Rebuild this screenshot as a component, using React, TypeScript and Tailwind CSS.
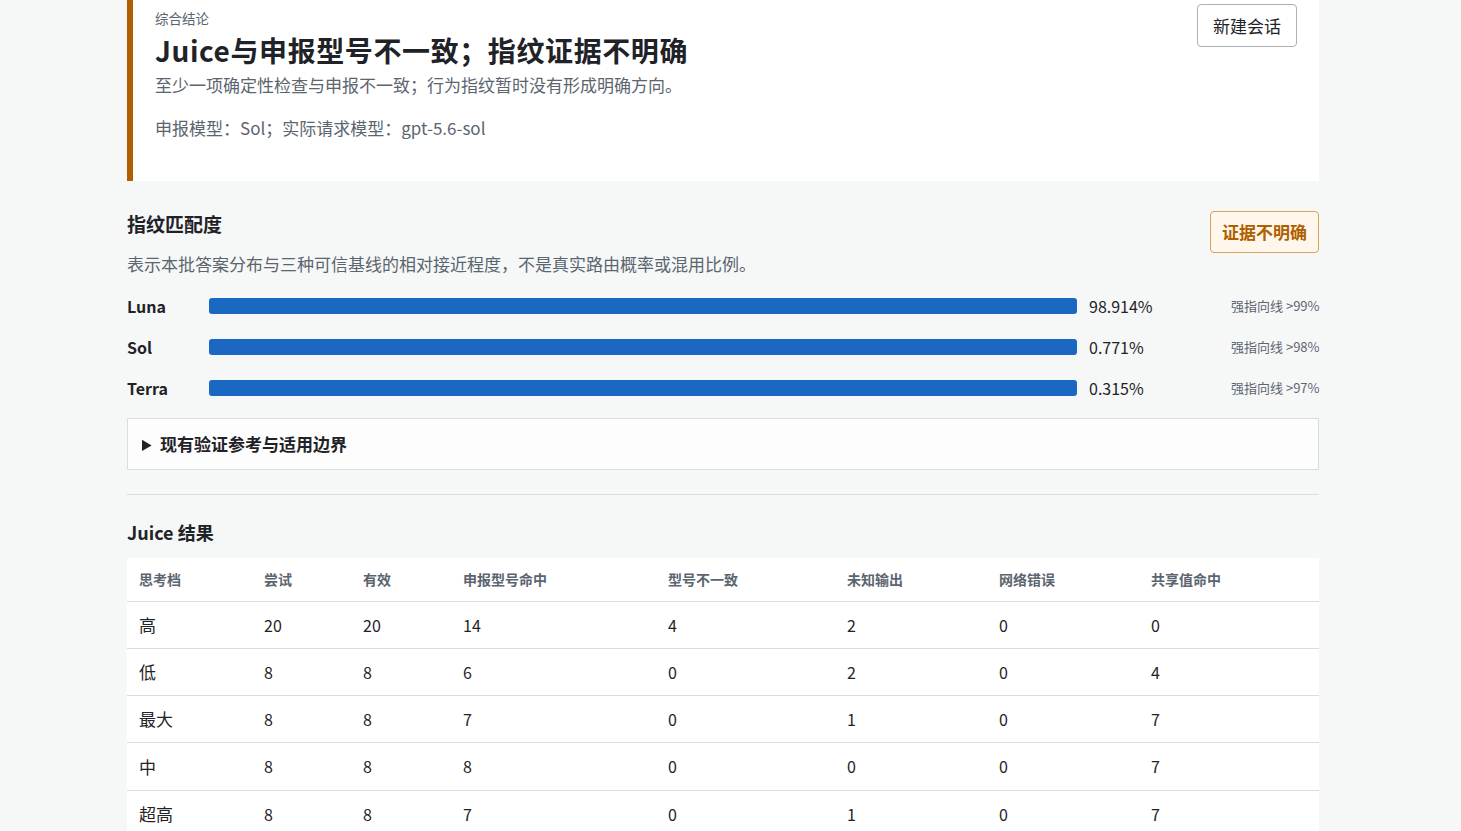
const FONT = "font-['Noto_Sans_CJK_SC','Noto_Sans',sans-serif]"

const bars = [
  { name: 'Luna', pct: '98.914%', note: '强指向线 >99%' },
  { name: 'Sol', pct: '0.771%', note: '强指向线 >98%' },
  { name: 'Terra', pct: '0.315%', note: '强指向线 >97%' },
]

const cols = ['思考档', '尝试', '有效', '申报型号命中', '型号不一致', '未知输出', '网络错误', '共享值命中']
const widths = ['w-[125px]', 'w-[99px]', 'w-[100px]', 'w-[205px]', 'w-[179px]', 'w-[152px]', 'w-[152px]', '']

const rows = [
  ['高', '20', '20', '14', '4', '2', '0', '0'],
  ['低', '8', '8', '6', '0', '2', '0', '4'],
  ['最大', '8', '8', '7', '0', '1', '0', '7'],
  ['中', '8', '8', '8', '0', '0', '0', '7'],
  ['超高', '8', '8', '7', '0', '1', '0', '7'],
]

function Verdict() {
  return (
    <section className="flex items-start justify-between border-l-[6px] border-[#b05f00] bg-white pb-[41px] pl-[22px] pr-[22px] pt-[4px]">
      <div>
        <div className="mt-[4px] text-[13.5px] leading-[20px] text-[#5b6570]">综合结论</div>
        <h1 className="mt-[4px] text-[28px] font-bold leading-[36px] tracking-[0.6px] text-[#1f2328]">
          Juice与申报型号不一致；指纹证据不明确
        </h1>
        <p className="mt-[5px] text-[17px] leading-[24px] text-[#5b6570]">
          至少一项确定性检查与申报不一致；行为指纹暂时没有形成明确方向。
        </p>
        <p className="mt-[19px] text-[17px] leading-[24px] text-[#5b6570]">
          申报模型：Sol；实际请求模型：gpt-5.6-sol
        </p>
      </div>
      <button
        type="button"
        className="h-[43px] w-[100px] rounded-[4px] border border-[#a9b1b8] bg-white text-[17px] text-[#1f2328]"
      >
        新建会话
      </button>
    </section>
  )
}

function Fingerprint() {
  return (
    <section className="pt-[30px]">
      <div className="flex items-start justify-between">
        <div>
          <h2 className="text-[19px] font-bold leading-[26px] text-[#1f2328]">指纹匹配度</h2>
          <p className="mt-[15px] text-[17px] leading-[24px] text-[#5b6570]">
            表示本批答案分布与三种可信基线的相对接近程度，不是真实路由概率或混用比例。
          </p>
        </div>
        <span className="rounded-[4px] border border-[#d9a15a] bg-[#fff7ec] px-[11px] py-[8px] text-[17px] font-bold leading-[24px] text-[#b05f00]">
          证据不明确
        </span>
      </div>
      <div className="mt-[17px] flex flex-col gap-[16px]">
        {bars.map((b) => (
          <div key={b.name} className="grid h-[25px] grid-cols-[70px_1fr_130px_88px] items-center gap-[12px]">
            <span className="text-[16px] font-bold text-[#1f2328]">{b.name}</span>
            <div className="h-[16px] rounded-[3px] bg-[#1a68c1]" />
            <span className="text-[16px] text-[#1f2328]">{b.pct}</span>
            <span className="whitespace-nowrap text-right text-[13px] text-[#5b6570]">{b.note}</span>
          </div>
        ))}
      </div>
      <details className="mt-[18px] border border-[#d8dde1] bg-[#fdfdfd] px-[14px] py-[13px]">
        <summary className="cursor-pointer text-[17px] font-bold leading-[24px] text-[#1f2328]">
          现有验证参考与适用边界
        </summary>
      </details>
    </section>
  )
}

function Results() {
  return (
    <section className="mt-[24px] border-t border-[#d8dde1] pt-[24px]">
      <h2 className="text-[18px] font-bold leading-[26px] text-[#1f2328]">Juice 结果</h2>
      <table className="mt-[13px] w-full border-collapse bg-white text-left">
        <thead>
          <tr className="border-b border-[#d8dde1]">
            {cols.map((c, i) => (
              <th key={c} className={`${widths[i]} h-[43px] px-[12px] text-[14px] font-bold text-[#5b6570]`}>
                {c}
              </th>
            ))}
          </tr>
        </thead>
        <tbody>
          {rows.map((r) => (
            <tr key={r[0]} className="border-b border-[#d8dde1]">
              {r.map((v, i) => (
                <td
                  key={i}
                  className={`h-[47.25px] px-[12px] text-[#1f2328] ${i === 0 ? 'text-[17px]' : 'text-[16px]'}`}
                >
                  {v}
                </td>
              ))}
            </tr>
          ))}
        </tbody>
      </table>
    </section>
  )
}

export default function App() {
  return (
    <div className={`min-h-screen bg-[#f6f8f7] ${FONT}`}>
      <main className="ml-[127px] w-[1192px] pb-[40px]">
        <Verdict />
        <Fingerprint />
        <Results />
      </main>
    </div>
  )
}
